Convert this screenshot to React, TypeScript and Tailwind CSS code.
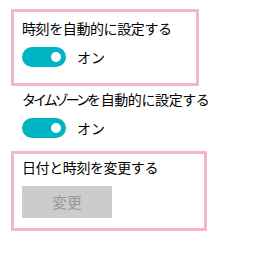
import React from 'react';

function Toggle() {
    return (
        <div className="flex items-center">
            <div className="w-[44px] h-[20px] rounded-full bg-[#00b4c3] flex items-center justify-end pr-[5px]">
                <div className="w-[10px] h-[10px] rounded-full bg-white" />
            </div>
            <span className="ml-[11px] text-[14px] leading-5 text-black">オン</span>
        </div>
    );
}

export default function App() {
    return (
        <div
            className="w-[272px] h-[253px] bg-white pl-[11px] pt-[9px]"
            style={{ fontFamily: '"Noto Sans CJK JP", "Noto Sans", sans-serif' }}
        >
            <div className="w-[188px] h-[77px] border-[3px] border-[#f4b4cc] pl-2 pt-[6px]">
                <p className="text-[14px] leading-5 text-black tracking-[-0.4px]">時刻を自動的に設定する</p>
                <div className="mt-[9px]">
                    <Toggle />
                </div>
            </div>
            <div className="pl-[11px] pt-[3px]">
                <p className="text-[14px] leading-5 text-black tracking-[-0.4px]">
                    <span className="tracking-[-3px]">タイムゾーン</span>を自動的に設定する
                </p>
                <div className="mt-[9px]">
                    <Toggle />
                </div>
            </div>
            <div className="mt-[13px] w-[196px] h-[80px] border-[3px] border-[#f4b4cc] pl-2 pt-[3px]">
                <p className="text-[14px] leading-5 text-black tracking-[-0.4px]">日付と時刻を変更する</p>
                <button className="mt-[9px] w-[90px] h-[32px] bg-[#cccccc] text-[15px] text-[#999999]">変更</button>
            </div>
        </div>
    );
}
